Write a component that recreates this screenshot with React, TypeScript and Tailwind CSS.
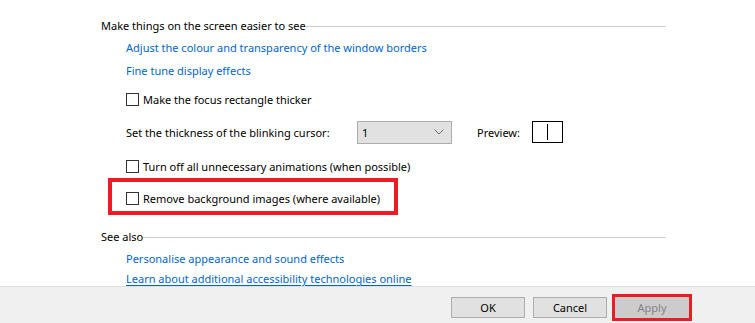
const Checkbox = () => <span className="w-[13px] h-[13px] border border-[#333333] bg-white shrink-0" />;

const SectionHeader = ({ label }: { label: string }) => (
  <div className="flex items-center h-[22px] pl-[101px] pr-[89px]">
    <span className="text-black">{label}</span>
    <span className="flex-1 h-px bg-[#cfcfcf] mt-[2px]" />
  </div>
);

const LinkRow = ({ label, underline, className = "" }: { label: string; underline?: boolean; className?: string }) => (
  <div className={`flex items-center h-[22px] pl-[126px] ${className}`}>
    <span className={`text-[#0066cc] ${underline ? "underline underline-offset-2" : ""}`}>{label}</span>
  </div>
);

const CheckRow = ({ label, className = "" }: { label: string; className?: string }) => (
  <div className={`flex items-center gap-[4px] h-[22px] pl-[126px] ${className}`}>
    <Checkbox />
    <span className="text-black">{label}</span>
  </div>
);

export default function App() {
  return (
    <div
      className="w-[755px] h-[323px] bg-white flex flex-col text-[11px] leading-none overflow-hidden whitespace-nowrap"
      style={{ fontFamily: '"Segoe UI", "Noto Sans", sans-serif' }}
    >
      <div className="h-[286px] overflow-hidden pt-[14px]">
        <SectionHeader label="Make things on the screen easier to see" />
        <LinkRow label="Adjust the colour and transparency of the window borders" />
        <LinkRow label="Fine tune display effects" className="mt-[1px]" />
        <CheckRow label="Make the focus rectangle thicker" className="mt-[7px]" />

        <div className="flex items-center h-[24px] pl-[126px] mt-[10px]">
          <span className="w-[231px] text-black">Set the thickness of the blinking cursor:</span>
          <div className="w-[95px] h-[23px] bg-[#e1e1e1] border border-[#adadad] flex items-center justify-between pl-[4px] pr-[7px]">
            <span className="text-black">1</span>
            <svg width="10" height="6" viewBox="0 0 10 6" fill="none" stroke="#6d6d6d" strokeWidth="1">
              <path d="M0.5 0.5 L5 5 L9.5 0.5" />
            </svg>
          </div>
          <span className="ml-[25px] w-[55px] text-black">Preview:</span>
          <div className="w-[31px] h-[22px] border border-black flex items-center justify-center">
            <span className="w-px h-[16px] bg-black" />
          </div>
        </div>

        <CheckRow label="Turn off all unnecessary animations (when possible)" className="mt-[11px]" />

        <div className="ml-[108px] mt-[1px] w-[290px] h-[37px] border-4 border-[#ed1c24] flex items-center gap-[4px] pl-[14px] pt-[3px]">
          <Checkbox />
          <span className="text-black">Remove background images (where available)</span>
        </div>

        <div className="mt-[10px]">
          <SectionHeader label="See also" />
        </div>
        <LinkRow label="Personalise appearance and sound effects" />
        <div className="flex items-end h-[17px] pl-[126px]">
          <span className="text-[#0066cc] underline underline-offset-2 leading-[14px]">
            Learn about additional accessibility technologies online
          </span>
        </div>
      </div>

      <div className="flex-1 bg-[#f0f0f0] border-t border-[#dfdfdf] flex items-start justify-end pr-[63px]">
        <button className="mt-[10px] w-[74px] h-[21px] bg-[#e1e1e1] border border-[#adadad] text-black">OK</button>
        <button className="mt-[10px] ml-[8px] w-[74px] h-[21px] bg-[#e1e1e1] border border-[#adadad] text-black">Cancel</button>
        <div className="mt-[7px] ml-[5px] w-[80px] h-[27px] border-[3px] border-[#ed1c24]">
          <button className="w-full h-full bg-[#cccccc] text-[#838383]">Apply</button>
        </div>
      </div>
    </div>
  );
}
